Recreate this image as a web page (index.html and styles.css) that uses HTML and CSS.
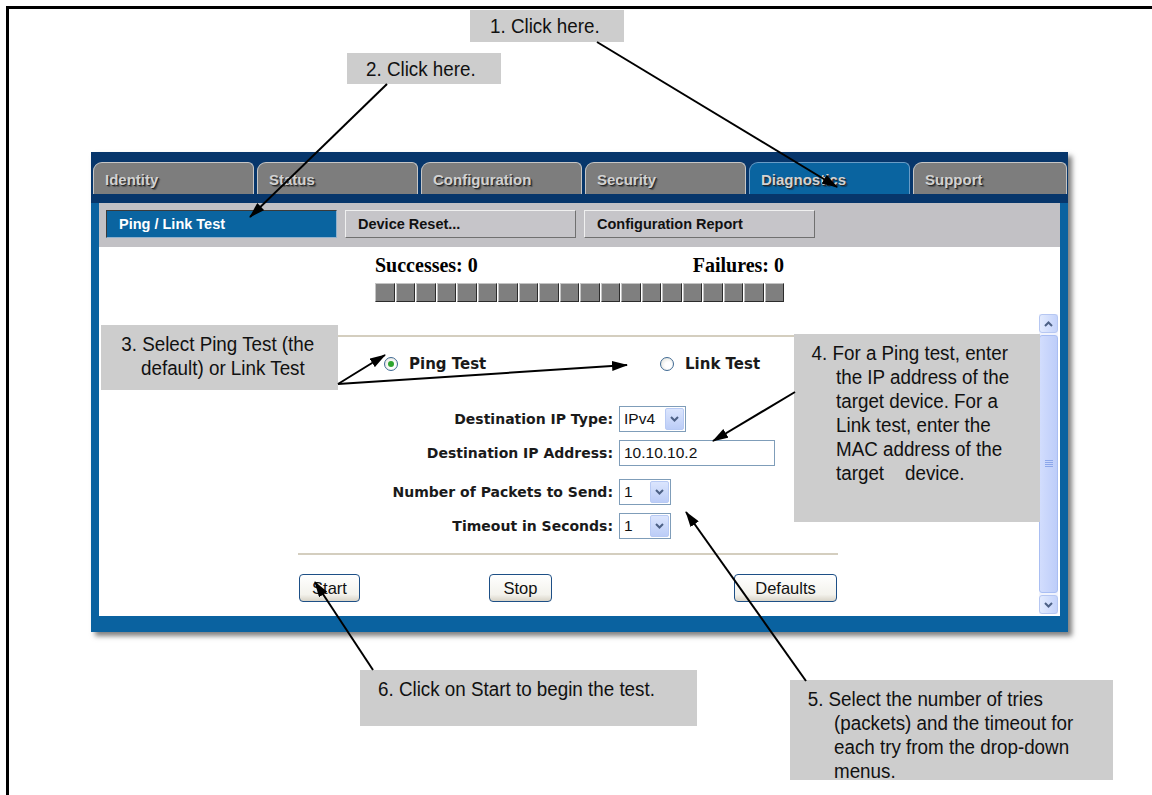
FILE: index.html
```html
<!DOCTYPE html>
<html>
<head>
<meta charset="utf-8">
<title>Ping / Link Test</title>
<link rel="stylesheet" href="styles.css">
</head>
<body>
<div class="sheet">
  <div class="window">
    <div class="tabs">
      <div class="tab">Identity</div>
      <div class="tab">Status</div>
      <div class="tab">Configuration</div>
      <div class="tab">Security</div>
      <div class="tab active">Diagnostics</div>
      <div class="tab last">Support</div>
    </div>
    <div class="navband"></div>
    <div class="body">
      <div class="content">
        <div class="subtabs">
          <div class="subtab active">Ping / Link Test</div>
          <div class="subtab">Device Reset...</div>
          <div class="subtab">Configuration Report</div>
        </div>
        <div class="counters">
          <div class="counts"><span>Successes: 0</span><span>Failures: 0</span></div>
          <div class="meter">
            <i></i><i></i><i></i><i></i><i></i><i></i><i></i><i></i><i></i><i></i>
            <i></i><i></i><i></i><i></i><i></i><i></i><i></i><i></i><i></i><i></i>
          </div>
        </div>
        <div class="frame">
          <div class="pane">
            <div class="rule top"></div>
            <div class="radios">
              <div class="radio-item ping"><span class="dot on"></span><span>Ping Test</span></div>
              <div class="radio-item link"><span class="dot"></span><span>Link Test</span></div>
            </div>
            <div class="form">
              <div class="row">
                <label>Destination IP Type:</label>
                <div class="select ip"><span>IPv4</span><span class="drop"><svg width="9" height="6" viewBox="0 0 9 6"><path d="M1 1 L4.5 4.5 L8 1" fill="none" stroke="#4d6185" stroke-width="2"/></svg></span></div>
              </div>
              <div class="row">
                <label>Destination IP Address:</label>
                <div class="input">10.10.10.2</div>
              </div>
              <div class="row r3">
                <label>Number of Packets to Send:</label>
                <div class="select num"><span>1</span><span class="drop"><svg width="9" height="6" viewBox="0 0 9 6"><path d="M1 1 L4.5 4.5 L8 1" fill="none" stroke="#4d6185" stroke-width="2"/></svg></span></div>
              </div>
              <div class="row">
                <label>Timeout in Seconds:</label>
                <div class="select num"><span>1</span><span class="drop"><svg width="9" height="6" viewBox="0 0 9 6"><path d="M1 1 L4.5 4.5 L8 1" fill="none" stroke="#4d6185" stroke-width="2"/></svg></span></div>
              </div>
            </div>
            <div class="rule bottom"></div>
            <div class="buttons">
              <div class="btn start">Start</div>
              <div class="btn stop">Stop</div>
              <div class="btn defaults">Defaults</div>
            </div>
          </div>
          <div class="scrollbar">
            <div class="sb-btn"><svg width="9" height="6" viewBox="0 0 9 6"><path d="M1 5 L4.5 1.5 L8 5" fill="none" stroke="#4d6185" stroke-width="2"/></svg></div>
            <div class="sb-thumb"><svg width="8" height="8" viewBox="0 0 8 8"><path d="M0 0.5 H8 M0 2.5 H8 M0 4.5 H8 M0 6.5 H8" stroke="#8da7ea" stroke-width="1"/></svg></div>
            <div class="sb-btn"><svg width="9" height="6" viewBox="0 0 9 6"><path d="M1 1 L4.5 4.5 L8 1" fill="none" stroke="#4d6185" stroke-width="2"/></svg></div>
          </div>
        </div>
      </div>
    </div>
  </div>
</div>

<div class="callout c1"><div class="t">1. Click here.</div></div>
<div class="callout c2"><div class="t">2. Click here.</div></div>
<div class="callout c3"><div class="t">3. Select Ping Test (the<br>default) or Link Test</div></div>
<div class="callout c4"><div class="t">4. For a Ping test, enter<br>the IP address of the<br>target device. For a<br>Link test, enter the<br>MAC address of the<br>target&nbsp;&nbsp;&nbsp; device.</div></div>
<div class="callout c5"><div class="t">5. Select the number of tries<br>(packets) and the timeout for<br>each try from the drop-down<br>menus.</div></div>
<div class="callout c6"><div class="t">6. Click on Start to begin the test.</div></div>

<svg class="arrows" width="1152" height="795" viewBox="0 0 1152 795">
  <defs>
    <marker id="ah" viewBox="0 0 16 10" refX="15" refY="5" markerWidth="16" markerHeight="10" markerUnits="userSpaceOnUse" orient="auto">
      <path d="M0 0 L16 5 L0 10 Z" fill="#000"/>
    </marker>
  </defs>
  <g stroke="#000" stroke-width="2" fill="none">
    <line x1="597" y1="42" x2="837" y2="187" marker-end="url(#ah)"/>
    <line x1="387" y1="84" x2="250" y2="217" marker-end="url(#ah)"/>
    <line x1="338" y1="384" x2="385" y2="355" marker-end="url(#ah)"/>
    <line x1="338" y1="384" x2="627" y2="365" marker-end="url(#ah)"/>
    <line x1="795" y1="392" x2="713" y2="441" marker-end="url(#ah)"/>
    <line x1="806" y1="681" x2="686" y2="512" marker-end="url(#ah)"/>
    <line x1="373" y1="670" x2="315" y2="582" marker-end="url(#ah)"/>
  </g>
</svg>
</body>
</html>
```

FILE: styles.css
```css
* { box-sizing: border-box; }

html, body {
  margin: 0;
  padding: 0;
  overflow: hidden;
  background: #fff;
}

body {
  position: relative;
  width: 1152px;
  height: 795px;
  font-family: "Liberation Sans", Arial, sans-serif;
  color: #000;
}

.sheet {
  margin: 6px 0 0 6px;
  height: 789px;
  border-top: 3px solid #000;
  border-left: 3px solid #000;
}

/* ---------- application window ---------- */
.window {
  margin: 143px 0 0 82px;
  width: 977px;
  height: 480px;
  background: #0a62a0;
  display: flex;
  flex-direction: column;
  box-shadow: 4px 4px 5px rgba(0, 0, 0, 0.5);
}

.tabs {
  height: 42px;
  display: flex;
  gap: 3px;
  background: #07366b;
  padding: 10px 1px 0 2px;
}

.tab {
  width: 161px;
  height: 32px;
  background: #7d7d7d;
  border: 1px solid #c6c6c6;
  border-bottom: none;
  border-radius: 9px 6px 0 0;
  font-weight: bold;
  font-size: 15px;
  line-height: 17px;
  color: #d2d2d2;
  text-shadow: 1px 1px 0 #2a2a2a, 2px 2px 1px rgba(0, 0, 0, 0.35);
  padding: 8px 0 0 11px;
}

.tab.active {
  background: #0a64a0;
  border-color: #6a9cc6;
}

.tab.last { flex: 1; }

.navband {
  height: 9px;
  background: #07366b;
}

.body {
  flex: 1;
  padding: 0 8px 16px 8px;
}

.content {
  height: 413px;
  background: #fff;
  display: flex;
  flex-direction: column;
}

/* ---------- sub tabs ---------- */
.subtabs {
  height: 44px;
  background: #c2c1c5;
  display: flex;
  gap: 8px;
  padding: 7px 0 0 7px;
}

.subtab {
  width: 231px;
  height: 28px;
  border: 1px solid;
  border-color: #f0f0f0 #707070 #707070 #f0f0f0;
  background: #c6c5c9;
  font-weight: bold;
  font-size: 14.5px;
  line-height: 17px;
  color: #111;
  padding: 5px 0 0 12px;
}

.subtab.active {
  background: #0a64a0;
  color: #fff;
  border-color: #3a3a3a #8fb0cc #8fb0cc #3a3a3a;
}

/* ---------- counters ---------- */
.counters {
  height: 66px;
  padding: 7px 0 0 276px;
}

.counts {
  width: 409px;
  display: flex;
  justify-content: space-between;
  font-family: "Liberation Serif", "Times New Roman", serif;
  font-weight: bold;
  font-size: 20px;
  line-height: 22px;
}

.meter {
  width: 409px;
  height: 19px;
  margin-top: 7px;
  display: grid;
  grid-template-columns: repeat(20, 1fr);
  gap: 1px;
}

.meter i {
  background: #7f7f7f;
  border: 1px solid;
  border-color: #c4c4c4 #2c2c2c #2c2c2c #c4c4c4;
}

/* ---------- frame ---------- */
.frame {
  height: 303px;
  display: flex;
}

.pane { flex: 1; }

.rule {
  margin-left: 199px;
  width: 540px;
  border-top: 2px solid #d4cebf;
}

.rule.top { margin-top: 22px; }
.rule.bottom { margin-top: 14px; }

.radios {
  display: flex;
  align-items: center;
  height: 18px;
  margin: 18px 0 0 285px;
  font-family: "DejaVu Sans", sans-serif;
  font-weight: bold;
  font-size: 15px;
  color: #1a1a1a;
}

.radio-item {
  display: flex;
  align-items: center;
  gap: 11px;
}

.radio-item.ping { width: 276px; }

.dot {
  width: 14px;
  height: 14px;
  border-radius: 50%;
  border: 1px solid #3f6a93;
  background: radial-gradient(circle at 60% 60%, #fff 30%, #dcdcd4);
  display: grid;
  place-items: center;
}

.dot.on::after {
  content: "";
  width: 6px;
  height: 6px;
  border-radius: 50%;
  background: #2fa52f;
}

.form { margin-top: 33px; }

.row {
  display: flex;
  align-items: center;
  height: 26px;
  margin-top: 8px;
}

.row:first-child { margin-top: 0; }
.row.r3 { margin-top: 13px; }

.row label {
  width: 514px;
  margin-right: 6px;
  text-align: right;
  font-family: "DejaVu Sans", sans-serif;
  font-weight: bold;
  font-size: 14px;
  color: #1a1a1a;
}

.select {
  height: 26px;
  display: flex;
  align-items: center;
  justify-content: space-between;
  border: 1px solid #7f9db9;
  background: #fff;
  padding: 0 1px 0 4px;
  font-size: 15.5px;
  color: #111;
}

.select.ip { width: 67px; }
.select.num { width: 52px; }

.drop {
  width: 19px;
  height: 22px;
  border: 1px solid #b8caf4;
  border-radius: 2px;
  background: linear-gradient(#dbe5fd, #bccdf7);
  display: grid;
  place-items: center;
}

.input {
  width: 156px;
  height: 26px;
  border: 1px solid #7f9db9;
  padding-left: 4px;
  display: flex;
  align-items: center;
  font-size: 15.5px;
  color: #111;
}

.buttons {
  display: flex;
  margin-top: 19px;
}

.btn {
  height: 28px;
  border: 1px solid #1d4f86;
  border-radius: 4px;
  background: linear-gradient(#ffffff, #f3f2ec 75%, #d9d4c8);
  font-size: 16.5px;
  color: #111;
  display: flex;
  align-items: center;
  justify-content: center;
}

.btn.start { width: 61px; margin-left: 200px; }
.btn.stop { width: 63px; margin-left: 129px; }
.btn.defaults { width: 103px; margin-left: 182px; }

/* ---------- scrollbar ---------- */
.scrollbar {
  width: 19px;
  margin: 1px 2px 2px 0;
  display: flex;
  flex-direction: column;
  background: #f0f3fd;
}

.sb-btn {
  height: 19px;
  border: 1px solid #b6c7f2;
  border-radius: 3px;
  background: linear-gradient(90deg, #e3ebfe, #c4d3fb);
  display: grid;
  place-items: center;
}

.sb-thumb {
  flex: 1;
  margin: 2px 0;
  border: 1px solid #a9bef3;
  border-radius: 3px;
  background: linear-gradient(90deg, #d2ddfd, #bdcdf9);
  display: grid;
  place-items: center;
}

/* ---------- annotation callouts ---------- */
.callout {
  position: absolute;
  background: #cdcdcd;
  font-family: "Liberation Sans", Arial, sans-serif;
  font-size: 20px;
  line-height: 24px;
  color: #111;
  white-space: nowrap;
}

/* condensed look of the annotation typeface */
.callout .t {
  transform: scaleX(0.94);
  transform-origin: 0 0;
}

.c1 { left: 470px; top: 10px; width: 154px; height: 32px; padding: 4px 0 0 20px; }
.c2 { left: 347px; top: 53px; width: 154px; height: 31px; padding: 4px 0 0 19px; }
.c3 { left: 101px; top: 325px; width: 237px; height: 65px; padding: 7px 0 0 40px; }
.c3 .t { text-indent: -21px; }
.c4 { left: 794px; top: 334px; width: 246px; height: 188px; padding: 7px 0 0 42px; }
.c4 .t { text-indent: -26px; }
.c5 { left: 790px; top: 680px; width: 323px; height: 100px; padding: 7px 0 0 44px; }
.c5 .t { text-indent: -28px; }
.c6 { left: 360px; top: 670px; width: 337px; height: 56px; padding: 7px 0 0 18px; }

.arrows {
  position: absolute;
  left: 0;
  top: 0;
  pointer-events: none;
}
```
